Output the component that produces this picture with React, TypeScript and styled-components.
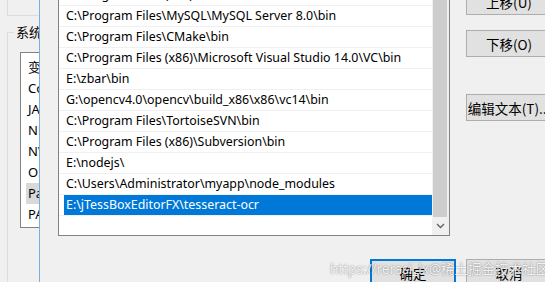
import styled, { createGlobalStyle } from 'styled-components';

const GlobalStyle = createGlobalStyle`
  html, body {
    margin: 0;
    padding: 0;
    background: #f0f0f0;
  }
  body {
    font-family: 'Noto Sans', 'Noto Sans CJK SC', sans-serif;
    font-size: 12.4px;
    color: #000;
  }
`;

const systemVars = ['变量', 'ComSpec', 'JAVA_HOME', 'NUMBER_OF_PROCESSORS', 'NVM_HOME', 'OS', 'Path', 'PATHEXT'];

const pathList = [
  'C:\\Program Files (x86)\\Common Files\\Oracle\\Java\\javapath',
  'C:\\Program Files (x86)\\Windows Kits\\8.1\\Windows Performance Toolkit\\',
  'C:\\Program Files\\MySQL\\MySQL Server 8.0\\bin',
  'C:\\Program Files\\CMake\\bin',
  'C:\\Program Files (x86)\\Microsoft Visual Studio 14.0\\VC\\bin',
  'E:\\zbar\\bin',
  'G:\\opencv4.0\\opencv\\build_x86\\x86\\vc14\\bin',
  'C:\\Program Files\\TortoiseSVN\\bin',
  'C:\\Program Files (x86)\\Subversion\\bin',
  'E:\\nodejs\\',
  'C:\\Users\\Administrator\\myapp\\node_modules',
  'E:\\jTessBoxEditorFX\\tesseract-ocr',
];

interface ItemProps {
  $selected?: boolean;
  $inactive?: boolean;
}

function App() {
  return (
    <Screen>
      <GlobalStyle />
      <ParentWindow>
        <UserGroupTail />
        <SystemGroup>
          <GroupLegend>系统变量(S)</GroupLegend>
          <ListView>
            {systemVars.map((name) => (
              <VarRow key={name}>
                <VarCell $inactive={name === 'Path'}>{name}</VarCell>
              </VarRow>
            ))}
          </ListView>
        </SystemGroup>
      </ParentWindow>

      <EditDialog>
        <ListBox>
          <Rows>
            {pathList.map((p, i) => (
              <PathRow key={p}>
                <PathCell $selected={i === pathList.length - 1}>{p}</PathCell>
              </PathRow>
            ))}
          </Rows>
          <ScrollBar>
            <Thumb />
            <ArrowButton>
              <svg width="9" height="6" viewBox="0 0 9 6">
                <polyline points="1,1 4.5,4.5 8,1" fill="none" stroke="#606060" strokeWidth="1.3" />
              </svg>
            </ArrowButton>
          </ScrollBar>
        </ListBox>

        <ButtonColumn>
          <Button>上移(U)</Button>
          <Button>下移(O)</Button>
          <Button $spaced>编辑文本(T)...</Button>
        </ButtonColumn>

        <BottomBar>
          <Button $primary>确定</Button>
          <Button>取消</Button>
        </BottomBar>
      </EditDialog>

      <Watermark>https://rerasi_lx@稀土掘金技术社区</Watermark>
    </Screen>
  );
}
export default App;

const Screen = styled.div`
  position: relative;
  width: 545px;
  height: 282px;
  overflow: hidden;
  background: #f0f0f0;
`;

const ParentWindow = styled.div`
  display: flex;
  flex-direction: column;
  padding-left: 7px;
`;

const UserGroupTail = styled.div`
  width: 200px;
  height: 16px;
  box-sizing: border-box;
  border-left: 1px solid #dcdcdc;
  border-bottom: 1px solid #dcdcdc;
`;

const SystemGroup = styled.fieldset`
  margin: 8px 0 0 0;
  padding: 0;
  min-width: 0;
  height: 300px;
  border: 1px solid #dcdcdc;
  border-right: none;
`;

const GroupLegend = styled.legend`
  margin-left: 6px;
  padding: 0 2px;
  font-family: 'Noto Sans CJK SC', sans-serif;
  font-size: 13px;
  line-height: 16px;
`;

const ListView = styled.div`
  margin: 12px 0 0 12px;
  width: 220px;
  height: 176px;
  box-sizing: border-box;
  border: 1px solid #828282;
  background: #fff;
  padding-top: 4px;
`;

const VarRow = styled.div`
  display: flex;
  height: 21px;
  padding-left: 5px;
`;

const VarCell = styled.div<ItemProps>`
  flex: 1;
  padding-left: 2px;
  line-height: 21px;
  font-size: 13px;
  background: ${(p) => (p.$inactive ? '#d9d9d9' : 'transparent')};
  white-space: nowrap;
`;

const EditDialog = styled.div`
  position: absolute;
  left: 39px;
  top: -60px;
  width: 620px;
  height: 400px;
  box-sizing: border-box;
  background: #f0f0f0;
  border-left: 1px solid #7aaee6;
  padding: 23px 0 0 18px;
  display: grid;
  grid-template-columns: 392px 86px;
  column-gap: 16px;
  row-gap: 23px;
  align-content: start;
`;

const ListBox = styled.div`
  display: flex;
  height: 273px;
  box-sizing: border-box;
  border: 1px solid #828282;
  background: #fff;
`;

const Rows = styled.div`
  flex: 1;
  min-width: 0;
`;

const PathRow = styled.div`
  display: flex;
  height: 21px;
  box-sizing: border-box;
  border-bottom: 1px solid #f0f0f0;
  padding-left: 5px;
`;

const PathCell = styled.div<ItemProps>`
  flex: 1;
  padding-left: 2px;
  line-height: 20px;
  white-space: nowrap;
  overflow: hidden;
  background: ${(p) => (p.$selected ? '#0078d7' : 'transparent')};
  color: ${(p) => (p.$selected ? '#fff' : '#000')};
`;

const ScrollBar = styled.div`
  width: 17px;
  display: flex;
  flex-direction: column;
  background: #f0f0f0;
`;

const Thumb = styled.div`
  flex: 1;
  margin: 0 2px 0 1px;
  background: #cdcdcd;
`;

const ArrowButton = styled.div`
  height: 18px;
  display: flex;
  align-items: center;
  justify-content: center;
  padding-right: 1px;
`;

const ButtonColumn = styled.div`
  display: flex;
  flex-direction: column;
  align-items: flex-start;
  gap: 15px;
  padding-top: 25px;
`;

const Button = styled.button<{ $primary?: boolean; $spaced?: boolean }>`
  width: 86px;
  height: 27px;
  box-sizing: border-box;
  margin: ${(p) => (p.$spaced ? '22px 0 0 0' : '0')};
  padding: 0;
  text-align: center;
  border: ${(p) => (p.$primary ? '2px solid #0078d7' : '1px solid #adadad')};
  background: #e1e1e1;
  font-family: 'Noto Sans CJK SC', sans-serif;
  font-size: 13.5px;
  color: #000;
  white-space: nowrap;
  overflow: hidden;
`;

const BottomBar = styled.div`
  grid-column: 1 / -1;
  display: flex;
  justify-content: flex-end;
  gap: 10px;
`;

const Watermark = styled.div`
  position: absolute;
  left: 330px;
  top: 258px;
  font-family: 'Noto Sans', 'Noto Sans CJK SC', sans-serif;
  font-size: 13.5px;
  color: rgba(255, 255, 255, 0.9);
  text-shadow: 0 0 1.5px rgba(0, 0, 0, 0.55);
  white-space: nowrap;
  pointer-events: none;
`;
